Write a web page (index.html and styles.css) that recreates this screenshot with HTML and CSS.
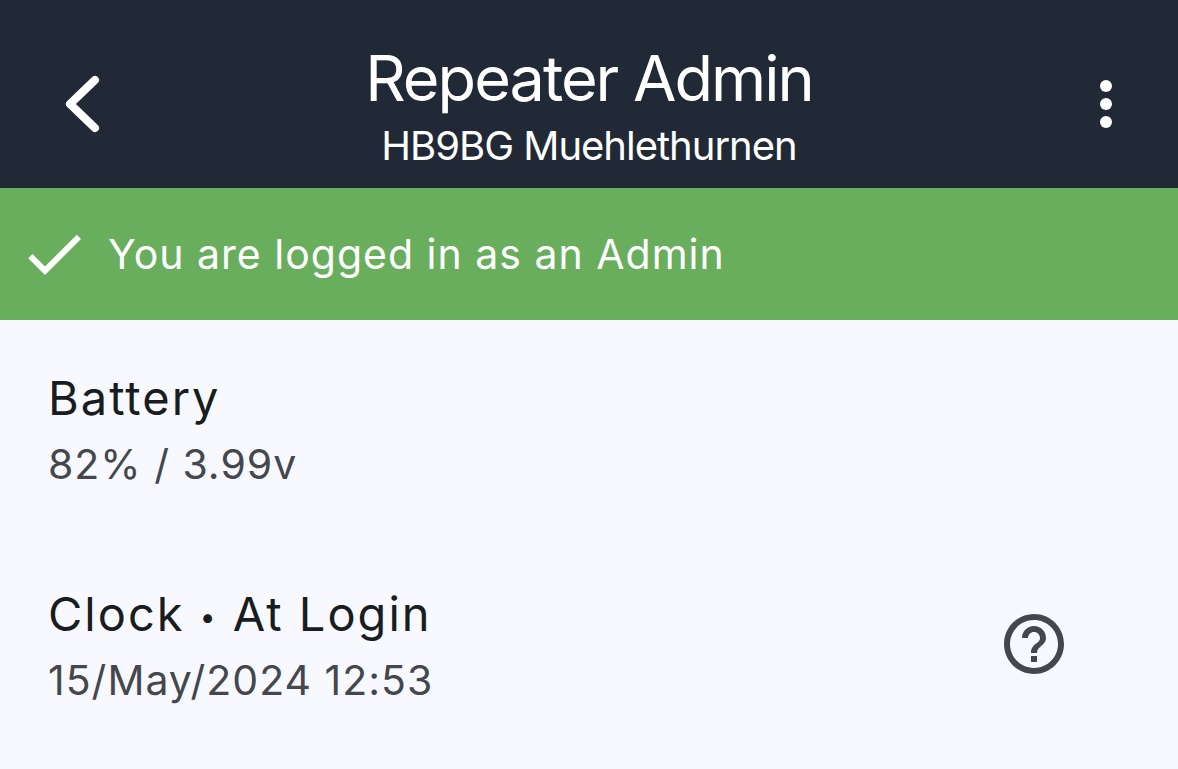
FILE: index.html
```
<!DOCTYPE html>
<html lang="en">
<head>
    <meta charset="UTF-8">
    <meta name="viewport" content="width=device-width, initial-scale=1.0">
    <title>Repeater Admin</title>
    <link rel="stylesheet" href="styles.css">
</head>
<body>
    <header class="app-bar">
        <button type="button" class="icon-btn back" aria-label="Back">
            <svg width="36" height="60" viewBox="0 0 36 60"><path d="M31 6L6 30L31 54" /></svg>
        </button>
        <div class="titles">
            <h1>Repeater Admin</h1>
            <p>HB9BG Muehlethurnen</p>
        </div>
        <button type="button" class="icon-btn more" aria-label="More options">
            <svg width="12" height="48" viewBox="0 0 12 48">
                <circle cx="6" cy="6" r="6" />
                <circle cx="6" cy="24" r="6" />
                <circle cx="6" cy="42" r="6" />
            </svg>
        </button>
    </header>

    <div class="banner">
        <svg width="60" height="60" viewBox="2 2 20 20"><path d="M9 16.17L4.83 12l-1.42 1.41L9 19 21 7l-1.41-1.41z" /></svg>
        <span>You are logged in as an Admin</span>
    </div>

    <main>
        <section class="item">
            <div class="item-text">
                <h2>Battery</h2>
                <p>82% / 3.99v</p>
            </div>
        </section>
        <section class="item">
            <div class="item-text">
                <h2>Clock <span class="dot">•</span> At Login</h2>
                <p>15/May/2024 12:53</p>
            </div>
            <button type="button" class="icon-btn help" aria-label="Help">
                <svg width="60" height="60" viewBox="2 2 20 20"><path d="M11 18h2v-2h-2v2zm1-16C6.48 2 2 6.48 2 12s4.48 10 10 10 10-4.48 10-10S17.52 2 12 2zm0 18c-4.41 0-8-3.59-8-8s3.59-8 8-8 8 3.59 8 8-3.59 8-8 8zm0-14c-2.21 0-4 1.79-4 4h2c0-1.1.9-2 2-2s2 .9 2 2c0 2-3 1.75-3 5h2c0-2.25 3-2.5 3-5 0-2.21-1.79-4-4-4z" /></svg>
            </button>
        </section>
    </main>
</body>
</html>
```
FILE: styles.css
```
body {
    margin: 0;
    font-family: Inter, "Liberation Sans", sans-serif;
    background: #f8f9ff;
    color: #191c20;
}

h1, h2, p {
    margin: 0;
    font-weight: 400;
}

.icon-btn {
    display: flex;
    align-items: center;
    justify-content: center;
    padding: 0;
    border: none;
    background: none;
    cursor: pointer;
}

.app-bar {
    display: flex;
    align-items: center;
    justify-content: space-between;
    padding: 36px 24px 16px;
    background: #222936;
    color: #fff;
}

.app-bar .icon-btn {
    width: 96px;
    height: 96px;
}

.app-bar .back {
    padding-left: 20px;
}

.back path {
    fill: none;
    stroke: #fff;
    stroke-width: 8;
    stroke-linecap: round;
    stroke-linejoin: round;
}

.more {
    fill: #fff;
}

.titles {
    text-align: center;
}

.titles h1 {
    font-size: 63px;
    line-height: 84px;
    letter-spacing: -2px;
}

.titles p {
    font-size: 40px;
    line-height: 52px;
    letter-spacing: -1px;
}

.banner {
    display: flex;
    align-items: center;
    gap: 24px;
    padding: 36px 24px;
    background: #69ae5d;
    color: #fff;
    font-size: 41px;
    line-height: 60px;
    letter-spacing: 1px;
}

.banner svg {
    fill: #fff;
}

.item {
    display: flex;
    align-items: center;
    justify-content: space-between;
    padding: 42px 96px 42px 48px;
}

.item h2 {
    font-size: 47px;
    line-height: 72px;
    letter-spacing: 2px;
}

.item .dot {
    font-size: 28px;
    line-height: 1;
    vertical-align: 4px;
}

.item p {
    color: #44474e;
    font-size: 41px;
    line-height: 60px;
    letter-spacing: 1px;
}

.help {
    width: 96px;
    height: 96px;
    fill: #44474e;
}
```
